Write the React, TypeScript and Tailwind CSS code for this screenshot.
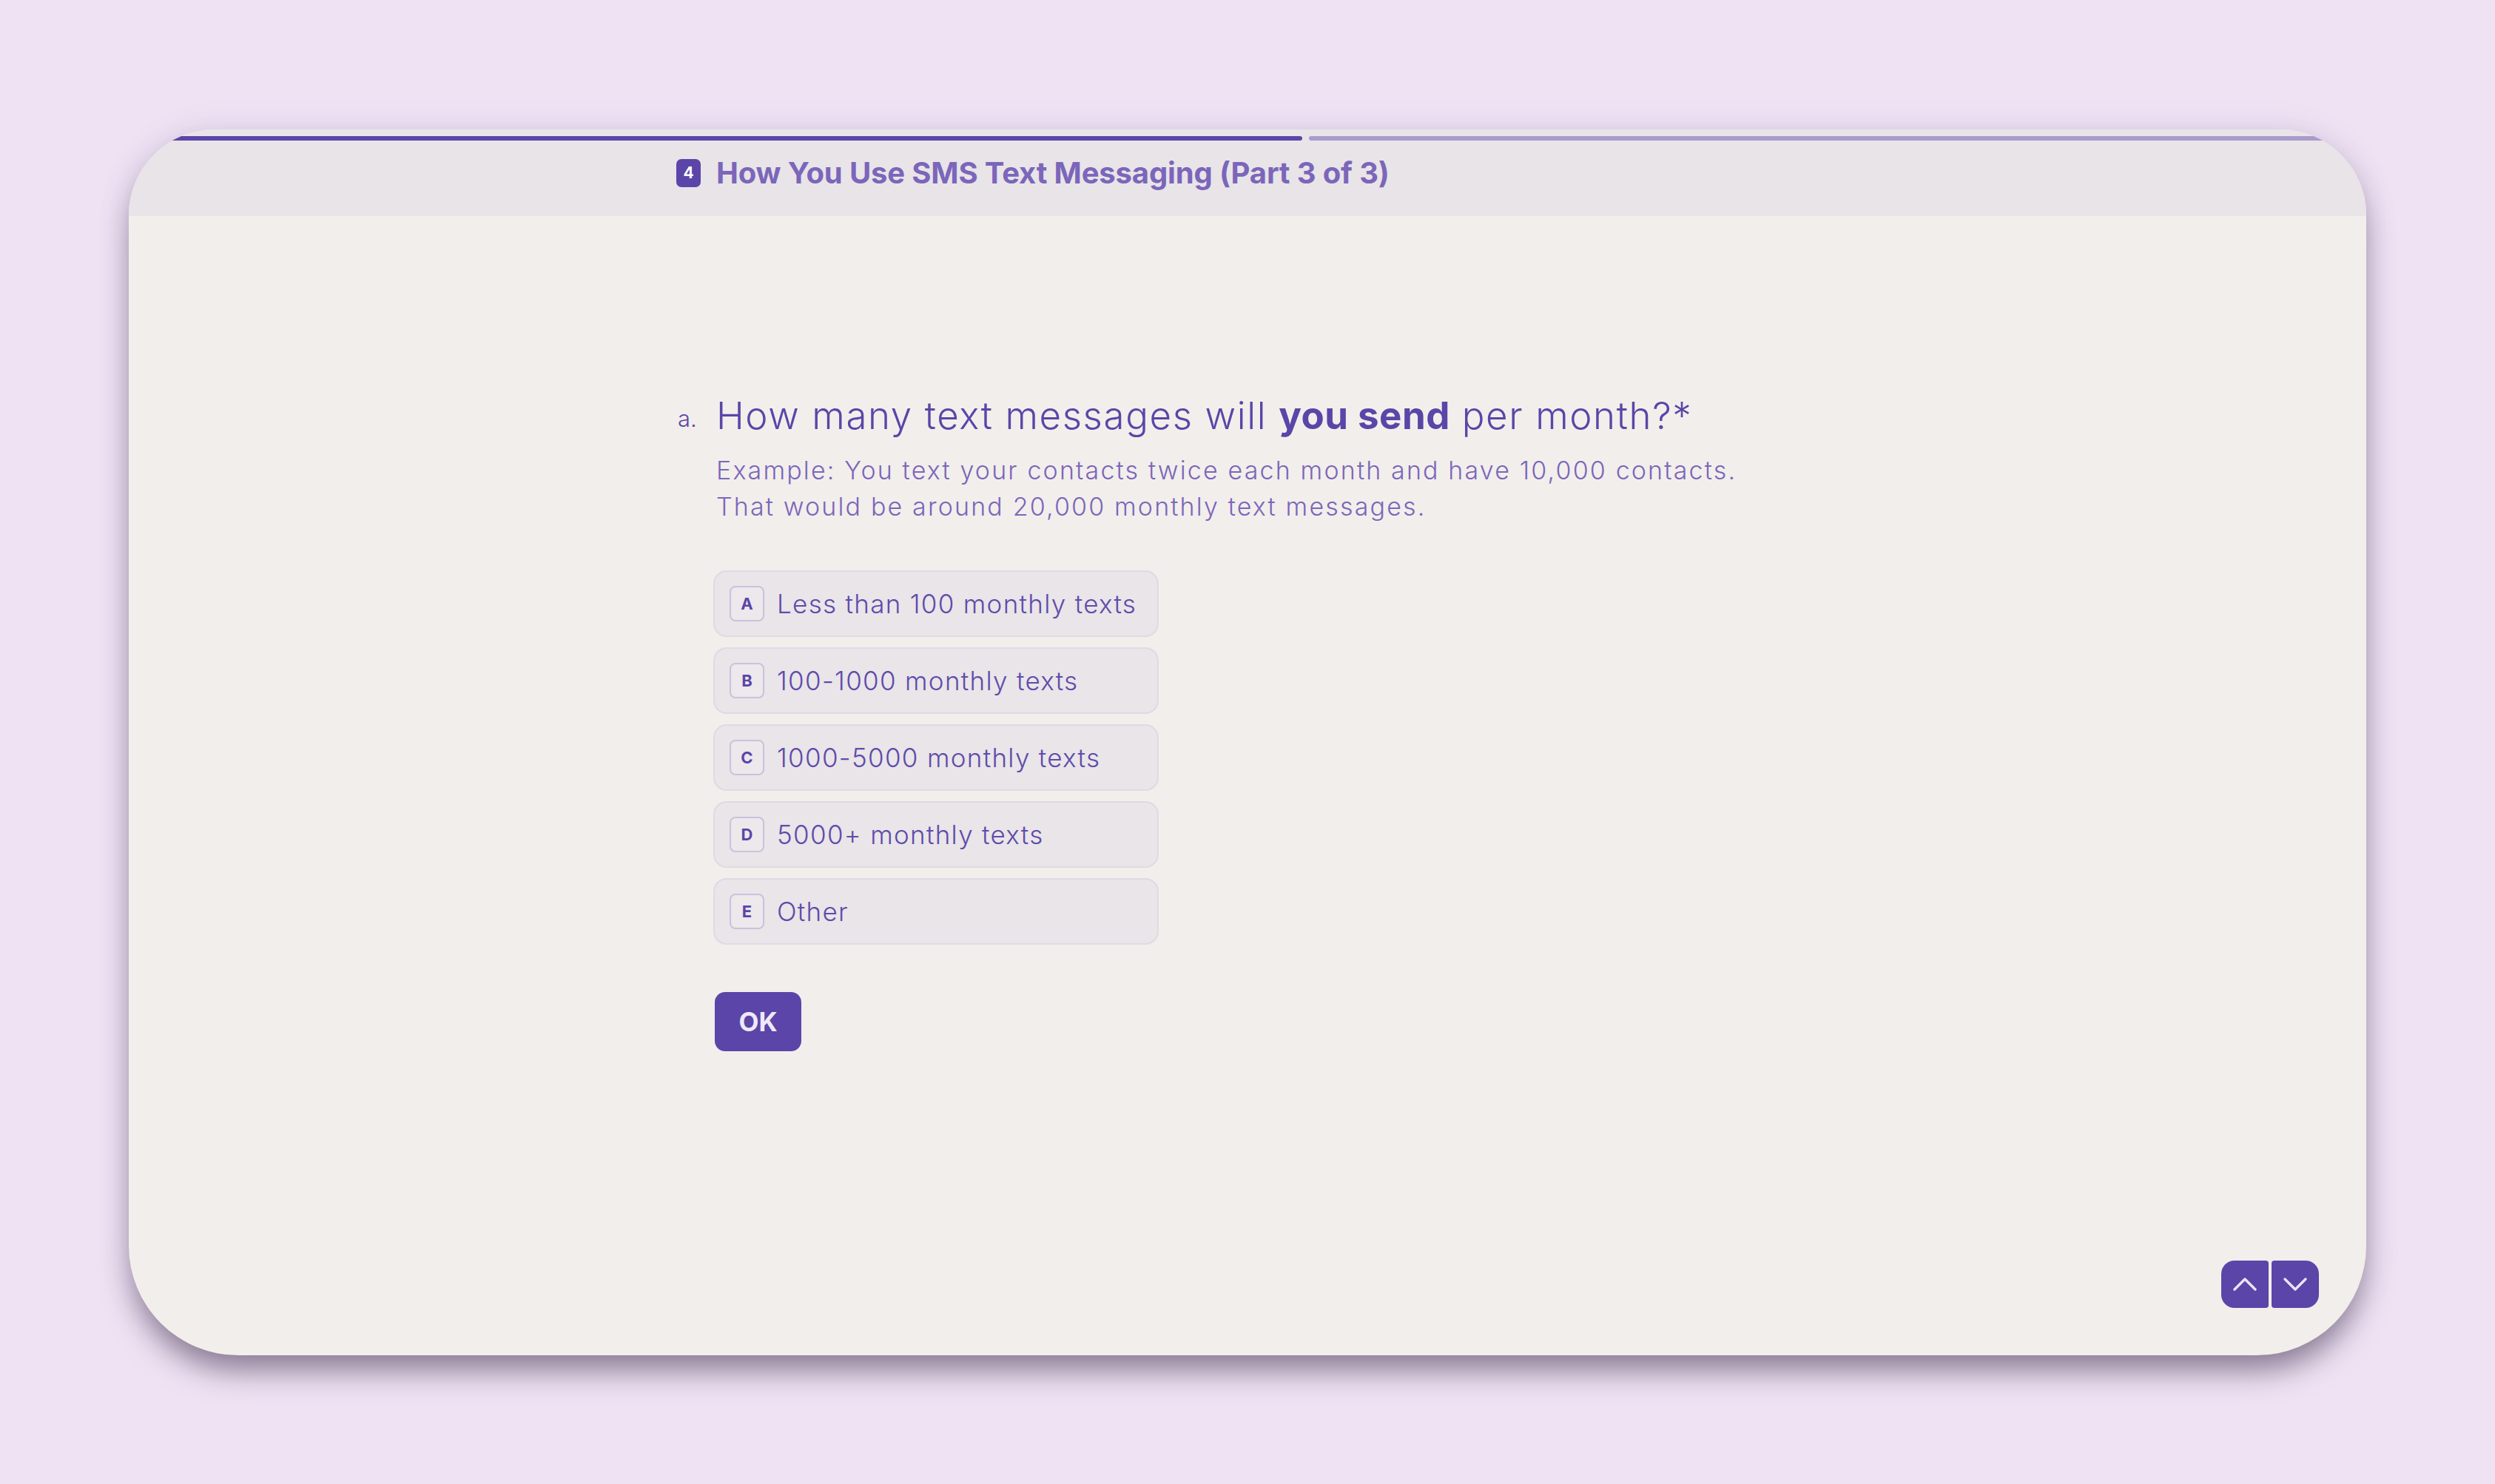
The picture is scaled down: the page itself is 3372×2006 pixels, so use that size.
import React from 'react';

const FONT = { fontFamily: 'Inter, "Noto Sans", sans-serif' };

const options = [
  { key: 'A', label: 'Less than 100 monthly texts' },
  { key: 'B', label: '100-1000 monthly texts' },
  { key: 'C', label: '1000-5000 monthly texts' },
  { key: 'D', label: '5000+ monthly texts' },
  { key: 'E', label: 'Other' },
];

function OptionRow({ k, label }: { k: string; label: string }) {
  return (
    <div className="flex items-center h-[90px] w-[602px] rounded-[18px] border-2 border-[#e0d9e5] bg-[#e9e5e8] pl-[20px]">
      <span className="flex items-center justify-center w-[47px] h-[48px] rounded-[8px] border-2 border-[#cbc1dd] bg-[#ece8ec] text-[22px] font-bold text-[#5b45a8]">
        {k}
      </span>
      <span className="ml-[17px] text-[35px] font-light text-[#5f4bab] tracking-[1.3px]">{label}</span>
    </div>
  );
}

export default function App() {
  return (
    <div className="w-full h-[2006px] bg-[#eee2f3] overflow-hidden" style={FONT}>
      <div className="ml-[174px] mt-[175px] w-[3024px] h-[1657px] flex flex-col overflow-hidden rounded-t-[116px] rounded-b-[148px] bg-[#f2eeeb] shadow-[0_26px_40px_-6px_rgba(60,45,75,0.55),0_0_40px_rgba(140,110,170,0.15)]">
        {/* header */}
        <div className="h-[117px] bg-[#e8e4e8] flex flex-col">
          <div className="pt-[9px] flex gap-[9px]">
            <div className="w-[1586px] h-[6px] rounded-full bg-[#5b45a8]" />
            <div className="flex-1 h-[6px] rounded-full bg-[#a99bcb]" />
          </div>
          <div className="mt-[20px] pl-[740px] flex items-center">
            <span className="flex items-center justify-center w-[33px] h-[38px] rounded-[7px] bg-[#5b45a8] text-white text-[21px] font-bold">
              4
            </span>
            <span className="ml-[21px] text-[40px] font-bold text-[#7b66ba] tracking-[-0.15px] leading-[48px]">
              How You Use SMS Text Messaging (Part 3 of 3)
            </span>
          </div>
        </div>

        {/* body */}
        <div className="flex-1 flex flex-col">
          <div className="pt-[238px] pl-[742px] flex">
            <div className="w-[52px] text-[31px] font-light text-[#5b45a8] leading-[64px] pt-[4px]">a.</div>
            <div className="flex flex-col">
              <div className="text-[51px] leading-[64px] font-light text-[#5b45a8] tracking-[1.6px]">
                How many text messages will <span className="font-bold tracking-[0.5px]">you send</span> per month?*
              </div>
              <div className="mt-[17px] text-[34px] leading-[49px] font-light text-[#7b66ba] tracking-[2.15px]">
                <div>Example: You text your contacts twice each month and have 10,000 contacts.</div>
                <div>That would be around 20,000 monthly text messages.</div>
              </div>
              <div className="mt-[62px] -ml-[4px] flex flex-col gap-[14px]">
                {options.map(o => (
                  <OptionRow key={o.key} k={o.key} label={o.label} />
                ))}
              </div>
              <button className="mt-[64px] -ml-[2px] w-[117px] h-[80px] rounded-[14px] bg-[#5b45a8] text-[#efe8f8] text-[35px] font-bold">
                OK
              </button>
            </div>
          </div>

          <div className="mt-auto pr-[64px] pb-[64px] flex justify-end gap-[4px]">
            <button className="w-[64px] h-[64px] rounded-l-[18px] rounded-r-[4px] bg-[#5b45a8] flex items-center justify-center">
              <svg width="64" height="64" viewBox="0 0 64 64" fill="none">
                <polyline points="18,39 32,25 46,39" stroke="#ebe4f5" strokeWidth="3.4" strokeLinecap="round" strokeLinejoin="round" />
              </svg>
            </button>
            <button className="w-[64px] h-[64px] rounded-r-[18px] rounded-l-[4px] bg-[#5b45a8] flex items-center justify-center">
              <svg width="64" height="64" viewBox="0 0 64 64" fill="none">
                <polyline points="18,25 32,39 46,25" stroke="#ebe4f5" strokeWidth="3.4" strokeLinecap="round" strokeLinejoin="round" />
              </svg>
            </button>
          </div>
        </div>
      </div>
    </div>
  );
}
